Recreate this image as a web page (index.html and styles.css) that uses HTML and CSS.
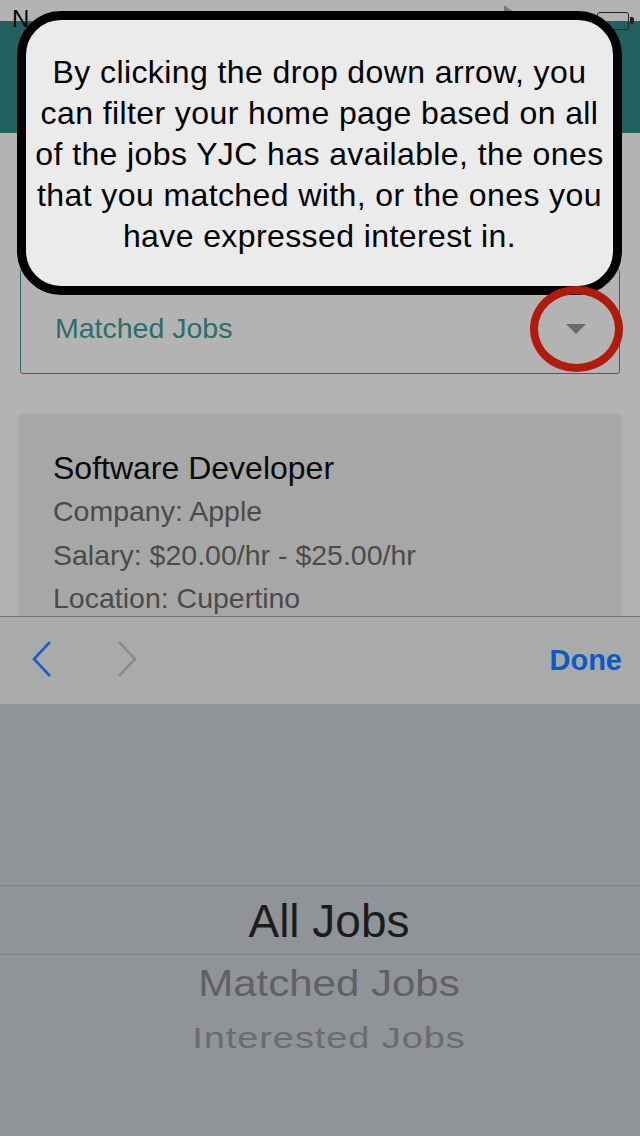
FILE: index.html
```html
<!DOCTYPE html>
<html lang="en">
<head>
<meta charset="utf-8">
<title>Job filter help</title>
<link rel="stylesheet" href="styles.css">
</head>
<body>
<div class="screen">
  <div class="app">
    <div class="status">
      <span class="carrier">N</span>
      <span class="status-right">
        <svg class="loc" width="8" height="6" viewBox="0 0 8 6"><path d="M0 0 L8 6 L0 6 Z" fill="#7a7a7a"/></svg>
        <span class="battery"><span class="nub"></span></span>
      </span>
    </div>
    <header class="topbar"></header>
    <main class="content">
      <div class="select">
        <span class="select-label">Matched Jobs</span>
        <span class="caret"></span>
      </div>
      <article class="card">
        <h2 class="job-title">Software Developer</h2>
        <p class="job-line">Company: Apple</p>
        <p class="job-line">Salary: $20.00/hr - $25.00/hr</p>
        <p class="job-line">Location: Cupertino</p>
      </article>
    </main>
  </div>
  <div class="accessory">
    <div class="nav-arrows">
      <svg class="chev" width="20" height="36" viewBox="0 0 20 36"><path d="M18 1 L2 18 L18 35" fill="none" stroke="#1a5fc8" stroke-width="2.6"/></svg>
      <svg class="chev" width="20" height="36" viewBox="0 0 20 36"><path d="M2 1 L18 18 L2 35" fill="none" stroke="#8b8c8c" stroke-width="2.6"/></svg>
    </div>
    <span class="done">Done</span>
  </div>
  <div class="picker">
    <div class="pick-band"><span class="pick-selected">All Jobs</span></div>
    <div class="pick-item pick-2"><span>Matched Jobs</span></div>
    <div class="pick-item pick-3"><span>Interested Jobs</span></div>
  </div>
  <div class="callout">
    <p class="callout-text">By clicking the drop down arrow, you<br>can filter your home page based on all<br>of the jobs YJC has available, the ones<br>that you matched with, or the ones you<br>have expressed interest in.</p>
  </div>
  <div class="ring"></div>
</div>
</body>
</html>
```
FILE: styles.css
```css
* { box-sizing: border-box; }
html, body { margin: 0; padding: 0; }
body {
  width: 640px;
  height: 1136px;
  overflow: hidden;
  background: #b3b3b3;
  font-family: "Liberation Sans", Arial, sans-serif;
}
.screen {
  position: relative;
  width: 640px;
  height: 1136px;
  display: flex;
  flex-direction: column;
}
.app {
  height: 616px;
  flex-shrink: 0;
  overflow: hidden;
  background: #b3b3b3;
  display: flex;
  flex-direction: column;
}
.app > * { flex-shrink: 0; }
.status {
  height: 21px;
  display: flex;
  justify-content: space-between;
  align-items: flex-start;
  padding: 0 11px 0 12px;
  position: relative;
  z-index: 1;
}
.carrier {
  font-size: 24px;
  line-height: 24px;
  margin-top: 7px;
  color: #000;
}
.status-right {
  display: flex;
  align-items: flex-start;
  gap: 85px;
}
.loc { margin-top: 5px; }
.battery {
  position: relative;
  width: 32px;
  height: 18px;
  margin-top: 12px;
  border: 1.5px solid #222;
  border-radius: 3px;
}
.nub {
  position: absolute;
  right: -6px;
  top: 4px;
  width: 4px;
  height: 7px;
  background: #222;
  border-radius: 0 2px 2px 0;
}
.topbar {
  height: 112px;
  background: #22615f;
}
.content {
  padding: 136px 20px 0 20px;
  display: flex;
  flex-direction: column;
}
.content > * { flex-shrink: 0; }
.select {
  height: 105px;
  border: 1.5px solid #2a6b69;
  border-radius: 3px;
  display: flex;
  align-items: center;
  justify-content: space-between;
  padding: 14px 33px 0 34px;
}
.select-label {
  font-size: 28.5px;
  color: #2b6e6b;
}
.caret {
  width: 0;
  height: 0;
  border-left: 10px solid transparent;
  border-right: 10px solid transparent;
  border-top: 10px solid #6b6b6b;
}
.card {
  margin-top: 41px;
  background: #a7a7a7;
  border-radius: 3px;
  box-shadow: 0 1px 4px rgba(0,0,0,0.18);
  padding: 31px 33px 40px 33px;
}
.job-title {
  margin: 0;
  font-weight: normal;
  font-size: 32px;
  line-height: 44px;
  color: #0a0a0a;
}
.job-line {
  margin: 0;
  font-size: 28.5px;
  line-height: 43.5px;
  color: #4b4b4b;
}
.accessory {
  height: 88px;
  flex-shrink: 0;
  background: #a9abaa;
  border-top: 1px solid #727272;
  display: flex;
  align-items: center;
  justify-content: space-between;
  padding: 0 18px 0 32px;
}
.nav-arrows {
  display: flex;
  gap: 65px;
  margin-top: -3px;
}
.done {
  font-size: 29px;
  font-weight: bold;
  color: #0b5bc4;
}
.picker {
  flex: 1;
  background: #909397;
  padding: 181px 0 0 18px;
  display: flex;
  flex-direction: column;
}
.pick-band {
  height: 70px;
  margin-left: -18px;
  padding-left: 18px;
  border-top: 1px solid #7b7e82;
  border-bottom: 1px solid #7b7e82;
  display: flex;
  align-items: center;
  justify-content: center;
}
.pick-selected {
  font-size: 46px;
  color: #1c1c1e;
  margin-top: 2px;
}
.pick-item {
  display: flex;
  align-items: center;
  justify-content: center;
}
.pick-2 {
  height: 58px;
  font-size: 42px;
  color: #606165;
}
.pick-2 span { transform: scaleY(0.88); }
.pick-3 {
  height: 50px;
  font-size: 38px;
  color: #6a6c70;
}
.pick-3 span { transform: scaleY(0.8); letter-spacing: 0.9px; }
.callout {
  position: absolute;
  left: 17px;
  top: 11px;
  width: 605px;
  height: 284px;
  border: 9px solid #000;
  border-radius: 44px;
  background: #ebebeb;
  padding-top: 32px;
  z-index: 2;
}
.callout-text {
  margin: 0;
  text-align: center;
  white-space: nowrap;
  font-size: 32px;
  line-height: 41px;
  letter-spacing: 0.4px;
  color: #000;
}
.ring {
  position: absolute;
  left: 530px;
  top: 286px;
  width: 93px;
  height: 86px;
  border: 8px solid #b01b0b;
  border-radius: 50%;
  z-index: 3;
}
```
